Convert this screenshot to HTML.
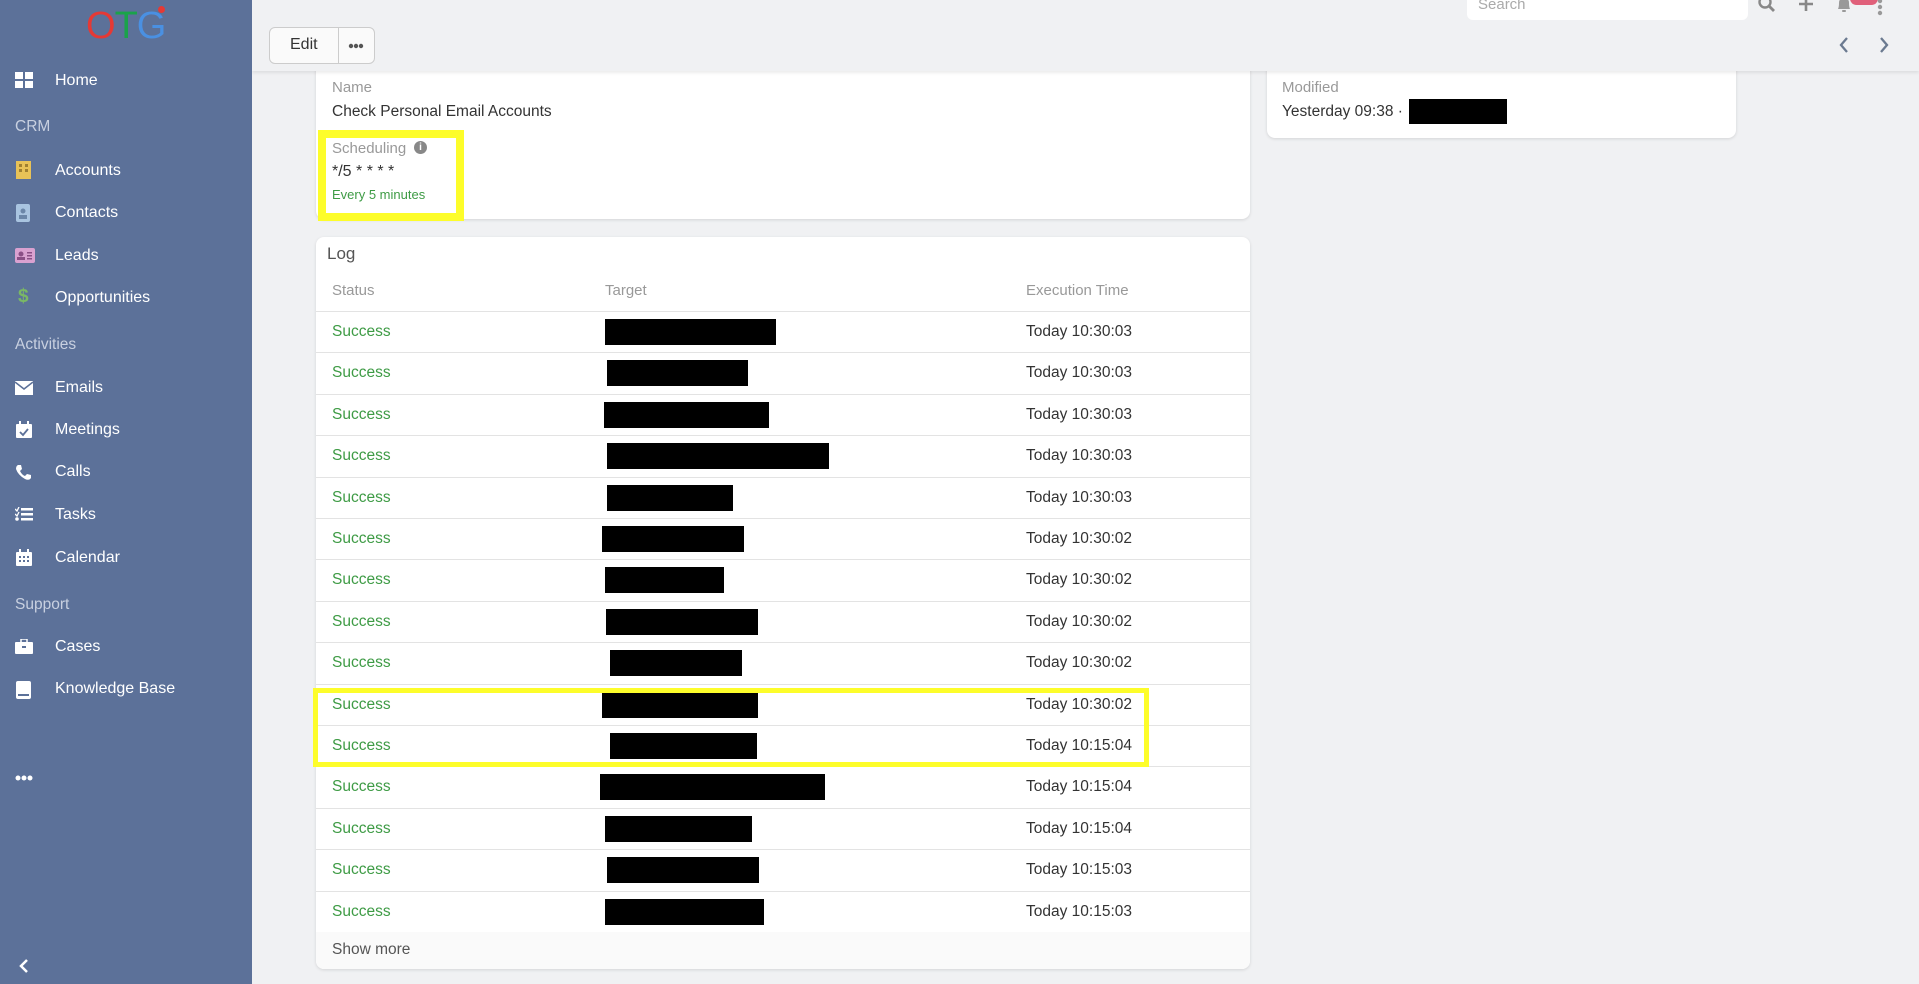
<!DOCTYPE html>
<html><head><meta charset="utf-8"><style>
*{box-sizing:border-box;margin:0;padding:0}
body{width:1919px;height:984px;overflow:hidden;background:#f0f1f3;font-family:"Liberation Sans",sans-serif;position:relative;color:#333}
.sb{position:absolute;left:0;top:0;width:252px;height:984px;background:#5c7199;color:#fff}
.it{position:absolute;left:55px;font-size:16px;line-height:20px}
.grp{position:absolute;left:15px;font-size:15.5px;color:#c8d0e0;line-height:20px}
.ic{position:absolute;left:15px}
.a{position:absolute}
.card{position:absolute;background:#fff;border-radius:8px;box-shadow:0 1px 3px rgba(0,0,0,.12)}
.lbl{color:#999;font-size:15px}
.row{position:absolute;left:0;width:934px;height:41.4px;border-top:1px solid #e3e3e3}
.row .s{position:absolute;left:16px;top:11px;color:#3e9b45;font-size:15.5px}
.row .t{position:absolute;left:710px;top:11px;font-size:15.5px;color:#333}
.row .r{position:absolute;background:#000;height:26px;top:7px}
</style></head><body>
<!-- cards under header -->
<div class="card" style="left:316px;top:40px;width:934px;height:179px"></div>
<div class="card" style="left:1267px;top:40px;width:469px;height:98px"></div>
<div class="a" style="left:252px;top:0;width:1667px;height:71px;background:#f0f1f3;box-shadow:0 2px 3px rgba(0,0,0,.08)"></div>

<div class="sb">
<div class="a" style="left:86px;top:7px;font-size:38px;line-height:38px;letter-spacing:-1px"><span style="color:#e53935">O</span><span style="color:#1aa34a">T</span><span style="color:#4a90e2">G</span></div>
<div class="a" style="left:158px;top:6px;width:7px;height:7px;border-radius:50%;background:#e53935"></div>
<svg class="ic" style="top:72px" width="18" height="16"><rect x="0" y="0" width="8" height="7" fill="#fff"/><rect x="10" y="0" width="8" height="7" fill="#fff"/><rect x="0" y="9" width="8" height="7" fill="#fff"/><rect x="10" y="9" width="8" height="7" fill="#fff"/></svg>
<div class="it" style="top:71px">Home</div>
<div class="grp" style="top:117px">CRM</div>
<svg class="ic" style="top:161px;left:16px" width="16" height="18"><rect width="15" height="18" fill="#e8c257"/><g fill="#a08030"><rect x="3" y="3" width="3" height="3"/><rect x="9" y="3" width="3" height="3"/><rect x="3" y="8" width="3" height="3"/><rect x="9" y="8" width="3" height="3"/></g></svg>
<div class="it" style="top:161px">Accounts</div>
<svg class="ic" style="top:204px;left:16px" width="16" height="18"><rect width="14" height="18" rx="2" fill="#a9c4e0"/><circle cx="7" cy="7" r="2.5" fill="#6b86a8"/><rect x="3" y="11" width="8" height="4" fill="#6b86a8"/></svg>
<div class="it" style="top:203px">Contacts</div>
<svg class="ic" style="top:248px" width="20" height="15"><rect width="20" height="15" rx="2" fill="#d9a1d0"/><circle cx="6" cy="6" r="2.5" fill="#8a4f86"/><rect x="2" y="9" width="8" height="3" fill="#8a4f86"/><rect x="12" y="4" width="5" height="1.5" fill="#8a4f86"/><rect x="12" y="7" width="5" height="1.5" fill="#8a4f86"/><rect x="12" y="10" width="5" height="1.5" fill="#8a4f86"/></svg>
<div class="it" style="top:246px">Leads</div>
<div class="a" style="left:18px;top:286px;font-size:19px;font-weight:bold;color:#7ab865">$</div>
<div class="it" style="top:288px">Opportunities</div>
<div class="grp" style="top:335px">Activities</div>
<svg class="ic" style="top:381px" width="18" height="14"><rect width="18" height="14" fill="#fff"/><path d="M0 1 L9 8 L18 1" stroke="#5c7199" stroke-width="1.5" fill="none"/></svg>
<div class="it" style="top:378px">Emails</div>
<svg class="ic" style="top:421px;left:16px" width="16" height="17"><rect y="3" width="16" height="14" rx="1" fill="#fff"/><rect x="3" y="0" width="2" height="4" fill="#fff"/><rect x="11" y="0" width="2" height="4" fill="#fff"/><path d="M4 11 L7 14 L12 8" stroke="#5c7199" stroke-width="1.8" fill="none"/></svg>
<div class="it" style="top:420px">Meetings</div>
<svg class="ic" style="top:464px" width="17" height="17"><path d="M3 1 L6 1 L7 5 L5 7 Q7 11 10 12 L12 10 L16 11 L16 14 Q14 17 10 15 Q3 11 1 5 Q1 2 3 1Z" fill="#fff"/></svg>
<div class="it" style="top:462px">Calls</div>
<svg class="ic" style="top:507px" width="18" height="15"><g fill="#fff"><rect x="6" y="1" width="12" height="2.5"/><rect x="6" y="6" width="12" height="2.5"/><rect x="6" y="11" width="12" height="2.5"/><circle cx="2" cy="12" r="1.8"/></g><path d="M0 2 L2 4 L4 0 M0 7 L2 9 L4 5" stroke="#fff" stroke-width="1.3" fill="none"/></svg>
<div class="it" style="top:505px">Tasks</div>
<svg class="ic" style="top:549px;left:16px" width="16" height="17"><rect y="3" width="16" height="14" rx="1" fill="#fff"/><rect x="3" y="0" width="2" height="4" fill="#fff"/><rect x="11" y="0" width="2" height="4" fill="#fff"/><g fill="#5c7199"><rect x="3" y="7" width="2" height="2"/><rect x="7" y="7" width="2" height="2"/><rect x="11" y="7" width="2" height="2"/><rect x="3" y="11" width="2" height="2"/><rect x="7" y="11" width="2" height="2"/><rect x="11" y="11" width="2" height="2"/></g></svg>
<div class="it" style="top:548px">Calendar</div>
<div class="grp" style="top:595px">Support</div>
<svg class="ic" style="top:639px" width="18" height="15"><rect y="3" width="18" height="12" rx="1" fill="#fff"/><rect x="6" y="0" width="6" height="4" fill="none" stroke="#fff" stroke-width="1.5"/><rect x="7" y="7" width="4" height="2" fill="#5c7199"/></svg>
<div class="it" style="top:637px">Cases</div>
<svg class="ic" style="top:681px;left:16px" width="16" height="18"><rect width="15" height="18" rx="2" fill="#fff"/><rect x="2" y="13" width="11" height="2" fill="#5c7199"/></svg>
<div class="it" style="top:679px">Knowledge Base</div>
<svg class="a" style="left:15px;top:775px" width="18" height="6"><circle cx="3" cy="3" r="2.5" fill="#fff"/><circle cx="9" cy="3" r="2.5" fill="#fff"/><circle cx="15" cy="3" r="2.5" fill="#fff"/></svg>
<svg class="a" style="left:18px;top:958px" width="12" height="16"><path d="M9 2 L3 8 L9 14" stroke="#fff" stroke-width="2.5" fill="none"/></svg>
</div>

<!-- top bar -->
<div class="a" style="left:1467px;top:-10px;width:281px;height:30px;background:#fff;border-radius:6px"></div>
<div class="a" style="left:1478px;top:-4px;font-size:15px;color:#aaa">Search</div>
<svg class="a" style="left:1758px;top:-3px" width="20" height="18"><circle cx="7" cy="5" r="5.5" stroke="#888" stroke-width="2.4" fill="none"/><path d="M11 9 L16 14" stroke="#888" stroke-width="2.8"/></svg>
<svg class="a" style="left:1799px;top:-3px" width="16" height="18"><path d="M7 0 V14 M0 7 H14" stroke="#888" stroke-width="2.6"/></svg>
<svg class="a" style="left:1836px;top:-5px" width="16" height="20"><path d="M2 14 Q3 12 3 8 Q3 3 8 3 Q13 3 13 8 Q13 12 14 14 Z" fill="#999"/><rect x="6" y="15" width="4" height="2" rx="1" fill="#999"/></svg>
<div class="a" style="left:1850px;top:-8px;width:28px;height:13px;border-radius:7px;background:#e0607a"></div>
<svg class="a" style="left:1877px;top:0" width="6" height="16"><circle cx="3" cy="1" r="2.2" fill="#999"/><circle cx="3" cy="7" r="2.2" fill="#999"/><circle cx="3" cy="13" r="2.2" fill="#999"/></svg>
<svg class="a" style="left:1838px;top:37px" width="12" height="16"><path d="M9 1 L3 8 L9 15" stroke="#6b7a90" stroke-width="2.3" fill="none"/></svg>
<svg class="a" style="left:1878px;top:37px" width="12" height="16"><path d="M3 1 L9 8 L3 15" stroke="#6b7a90" stroke-width="2.3" fill="none"/></svg>
<div class="a" style="left:269px;top:27px;width:106px;height:37px;border:1px solid #ccc;border-radius:6px;background:#fafafa"></div>
<div class="a" style="left:338px;top:27px;width:1px;height:37px;background:#ccc"></div>
<div class="a" style="left:290px;top:36px;font-size:16px">Edit</div>
<svg class="a" style="left:348px;top:43px" width="16" height="6"><circle cx="3" cy="3" r="2.2" fill="#555"/><circle cx="8" cy="3" r="2.2" fill="#555"/><circle cx="13" cy="3" r="2.2" fill="#555"/></svg>

<!-- name card content -->
<div class="a lbl" style="left:332px;top:79px">Name</div>
<div class="a" style="left:332px;top:103px;font-size:15.5px">Check Personal Email Accounts</div>
<div class="a" style="left:318px;top:130px;width:146px;height:91px;border:8px solid #fdfd2a"></div>
<div class="a lbl" style="left:332px;top:140px">Scheduling</div>
<div class="a" style="left:414px;top:141px;width:13px;height:13px;border-radius:50%;background:#888;color:#fff;font-size:10px;font-weight:bold;text-align:center;line-height:13px">i</div>
<div class="a" style="left:332px;top:163px;font-size:16px">*/5 * * * *</div>
<div class="a" style="left:332px;top:187px;font-size:13px;color:#3e9b45">Every 5 minutes</div>

<!-- modified content -->
<div class="a lbl" style="left:1282px;top:79px">Modified</div>
<div class="a" style="left:1282px;top:103px;font-size:15.5px">Yesterday 09:38 ·</div>
<div class="a" style="left:1409px;top:99px;width:98px;height:25px;background:#000"></div>

<!-- log card -->
<div class="card" style="left:316px;top:237px;width:934px;height:732px;overflow:hidden">
<div class="a" style="left:11px;top:7px;font-size:17px;color:#555">Log</div>
<div class="a lbl" style="left:16px;top:45px">Status</div>
<div class="a lbl" style="left:289px;top:45px">Target</div>
<div class="a lbl" style="left:710px;top:45px">Execution Time</div>
<div class="row" style="top:74px"><span class="s">Success</span><span class="r" style="left:289px;width:171px"></span><span class="t">Today 10:30:03</span></div>
<div class="row" style="top:115.4px"><span class="s">Success</span><span class="r" style="left:291px;width:141px"></span><span class="t">Today 10:30:03</span></div>
<div class="row" style="top:156.8px"><span class="s">Success</span><span class="r" style="left:288px;width:165px"></span><span class="t">Today 10:30:03</span></div>
<div class="row" style="top:198.2px"><span class="s">Success</span><span class="r" style="left:291px;width:222px"></span><span class="t">Today 10:30:03</span></div>
<div class="row" style="top:239.6px"><span class="s">Success</span><span class="r" style="left:291px;width:126px"></span><span class="t">Today 10:30:03</span></div>
<div class="row" style="top:281px"><span class="s">Success</span><span class="r" style="left:286px;width:142px"></span><span class="t">Today 10:30:02</span></div>
<div class="row" style="top:322.4px"><span class="s">Success</span><span class="r" style="left:289px;width:119px"></span><span class="t">Today 10:30:02</span></div>
<div class="row" style="top:363.8px"><span class="s">Success</span><span class="r" style="left:290px;width:152px"></span><span class="t">Today 10:30:02</span></div>
<div class="row" style="top:405.2px"><span class="s">Success</span><span class="r" style="left:294px;width:132px"></span><span class="t">Today 10:30:02</span></div>
<div class="row" style="top:446.6px"><span class="s">Success</span><span class="r" style="left:286px;width:156px"></span><span class="t">Today 10:30:02</span></div>
<div class="row" style="top:488px"><span class="s">Success</span><span class="r" style="left:294px;width:147px"></span><span class="t">Today 10:15:04</span></div>
<div class="row" style="top:529.4px"><span class="s">Success</span><span class="r" style="left:284px;width:225px"></span><span class="t">Today 10:15:04</span></div>
<div class="row" style="top:570.8px"><span class="s">Success</span><span class="r" style="left:289px;width:147px"></span><span class="t">Today 10:15:04</span></div>
<div class="row" style="top:612.2px"><span class="s">Success</span><span class="r" style="left:291px;width:152px"></span><span class="t">Today 10:15:03</span></div>
<div class="row" style="top:653.6px"><span class="s">Success</span><span class="r" style="left:289px;width:159px"></span><span class="t">Today 10:15:03</span></div>
<div class="a" style="left:0;top:695px;width:934px;height:37px;background:#fafafa"></div>
<div class="a" style="left:16px;top:704px;font-size:15.5px;color:#555">Show more</div>
</div>
<div class="a" style="left:313px;top:688px;width:836px;height:79px;border:5px solid #fdfd2a"></div>
</body></html>
